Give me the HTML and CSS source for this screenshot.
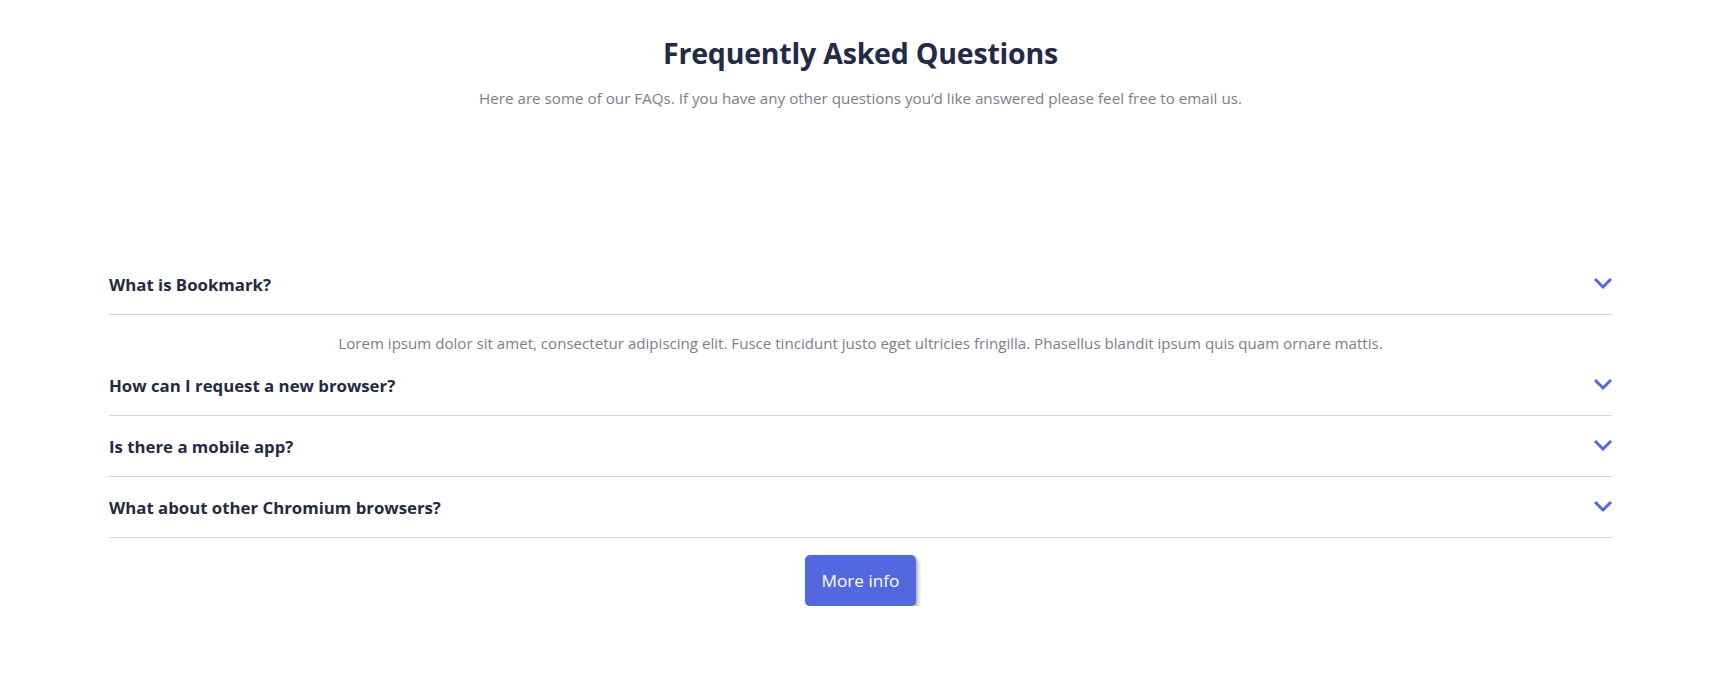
FILE: index.html
```html
<!DOCTYPE html>
<html lang="en">
<head>
<meta charset="utf-8">
<title>FAQ</title>
<link rel="stylesheet" href="styles.css">
</head>
<body>
<main class="page">
  <header class="faq-header">
    <h1 class="faq-title">Frequently Asked Questions</h1>
    <p class="faq-intro">Here are some of our FAQs. If you have any other questions you’d like answered please feel free to email us.</p>
  </header>
  <section class="faq-list">
    <div class="faq-item">
      <div class="faq-question">
        <span>What is Bookmark?</span>
        <svg class="chevron" width="18" height="12" viewBox="0 0 18 12"><path d="M1 1l8 8 8-8" fill="none" stroke="#5368df" stroke-width="3"/></svg>
      </div>
      <p class="faq-answer">Lorem ipsum dolor sit amet, consectetur adipiscing elit. Fusce tincidunt justo eget ultricies fringilla. Phasellus blandit ipsum quis quam ornare mattis.</p>
    </div>
    <div class="faq-item">
      <div class="faq-question">
        <span>How can I request a new browser?</span>
        <svg class="chevron" width="18" height="12" viewBox="0 0 18 12"><path d="M1 1l8 8 8-8" fill="none" stroke="#5368df" stroke-width="3"/></svg>
      </div>
    </div>
    <div class="faq-item">
      <div class="faq-question">
        <span>Is there a mobile app?</span>
        <svg class="chevron" width="18" height="12" viewBox="0 0 18 12"><path d="M1 1l8 8 8-8" fill="none" stroke="#5368df" stroke-width="3"/></svg>
      </div>
    </div>
    <div class="faq-item">
      <div class="faq-question">
        <span>What about other Chromium browsers?</span>
        <svg class="chevron" width="18" height="12" viewBox="0 0 18 12"><path d="M1 1l8 8 8-8" fill="none" stroke="#5368df" stroke-width="3"/></svg>
      </div>
    </div>
  </section>
  <div class="faq-actions">
    <button class="btn-more" type="button">More info</button>
  </div>
</main>
</body>
</html>
```

FILE: styles.css
```css
* { box-sizing: border-box; }

html, body {
  margin: 0;
  background: #ffffff;
}

body {
  font-family: "Open Sans", "Noto Sans", sans-serif;
  color: #242a45;
}

.page {
  width: calc(100% - 12px);
  padding-top: 33px;
}

.faq-header {
  text-align: center;
}

.faq-title {
  margin: 0;
  font-size: 28.5px;
  line-height: 40px;
  font-weight: 700;
  color: #242a45;
  letter-spacing: -0.2px;
}

.faq-intro {
  margin: 13px 0 0;
  font-size: 15.2px;
  line-height: 24px;
  color: #7b7e8c;
}

.faq-list {
  width: 1503px;
  margin: 144px auto 0;
}

.faq-question {
  display: flex;
  justify-content: space-between;
  align-items: center;
  height: 61px;
  padding-top: 1px;
  border-bottom: 1px solid #d4d5dc;
  font-size: 16.8px;
  font-weight: 700;
  color: #242a45;
}

.chevron {
  display: block;
  margin-top: -2px;
}

.faq-answer {
  margin: 0;
  padding-top: 16px;
  font-size: 15.1px;
  line-height: 24px;
  text-align: center;
  color: #7b7e8c;
}

.faq-actions {
  display: flex;
  justify-content: center;
  padding-top: 17px;
}

.btn-more {
  width: 111px;
  height: 51px;
  border: 0;
  border-radius: 5px;
  background: #5368df;
  color: #ffffff;
  font-family: "Open Sans", "Noto Sans", sans-serif;
  font-size: 17.2px;
  box-shadow: 2px 3px 4px rgba(0, 0, 0, 0.35);
  cursor: pointer;
}
```
